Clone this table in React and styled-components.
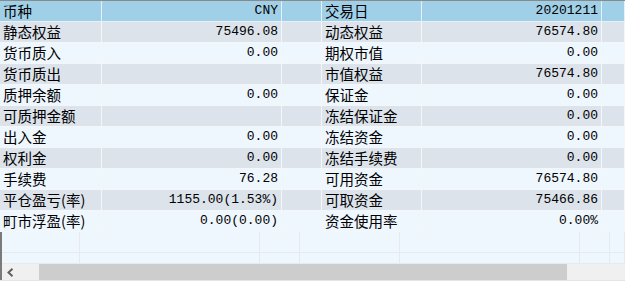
import React from "react";
import styled, { createGlobalStyle } from "styled-components";

const Global = createGlobalStyle`
  html, body { margin: 0; padding: 0; background: #ffffff; }
  body { width: 625px; height: 283px; overflow: hidden; }
`;

const Frame = styled.div`
  width: 625px;
  height: 283px;
  display: flex;
  flex-direction: column;
  border-top: 1px solid #8a8a8a;
  box-sizing: border-box;
  background: #ffffff;
  overflow: hidden;
`;

const COLS = "102px 180px 40px 100px 180px 1fr";

const Row = styled.div`
  display: grid;
  grid-template-columns: ${COLS};
  height: 21px;
  background: ${(p) => (p.$kind === "head" ? "#a0cfe8" : p.$kind === "odd" ? "#dce3eb" : "#eef6fe")};
`;

const Cell = styled.div`
  box-sizing: border-box;
  border-right: 1px solid ${(p) => (p.$head ? "#e4f1f8" : "#f4f6f8")};
  border-bottom: 1px solid ${(p) => (p.$head ? "#e4f1f8" : "#f4f6f8")};
  display: flex;
  align-items: center;
  justify-content: ${(p) => (p.$num ? "flex-end" : "flex-start")};
  padding: ${(p) => (p.$num ? "0 3px 0 0" : "0 0 0 3px")};
  white-space: nowrap;
  overflow: hidden;
  color: #000;
  font-family: ${(p) => (p.$num ? '"Liberation Mono", monospace' : '"Noto Sans CJK SC", sans-serif')};
  font-size: ${(p) => (p.$num ? "13px" : "14.5px")};
  line-height: 20px;
`;

const Blank = styled.div`
  display: grid;
  grid-template-columns: 78px 180px 40px 100px 180px 30px 1fr;
  height: ${(p) => p.$h}px;
  background: #eef6fe;
  border-left: 2px solid #7a7a7a;
`;

const BlankCell = styled.div`
  box-sizing: border-box;
  border-right: 1px solid #e6eaee;
  border-bottom: 1px solid #e6eaee;
`;

const ScrollBar = styled.div`
  display: flex;
  height: 16px;
  background: #f0f0f0;
  border-left: 2px solid #7a7a7a;
`;

const Arrow = styled.div`
  width: 37px;
  display: flex;
  align-items: center;
  padding-left: 5px;
  box-sizing: border-box;
`;

const Thumb = styled.div`
  width: 528px;
  background: #cdcdcd;
`;

const Bottom = styled.div`
  flex: 1;
  border-top: 1px solid #e4e4e4;
  background: #ffffff;
`;

const rows = [
  ["静态权益", "75496.08", "动态权益", "76574.80"],
  ["货币质入", "0.00", "期权市值", "0.00"],
  ["货币质出", "", "市值权益", "76574.80"],
  ["质押余额", "0.00", "保证金", "0.00"],
  ["可质押金额", "", "冻结保证金", "0.00"],
  ["出入金", "0.00", "冻结资金", "0.00"],
  ["权利金", "0.00", "冻结手续费", "0.00"],
  ["手续费", "76.28", "可用资金", "76574.80"],
  ["平仓盈亏(率)", "1155.00(1.53%)", "可取资金", "75466.86"],
  ["町市浮盈(率)", "0.00(0.00)", "资金使用率", "0.00%"],
];

export default function App() {
  return (
    <>
      <Global />
      <Frame>
        <Row $kind="head">
          <Cell $head>币种</Cell>
          <Cell $head $num>CNY</Cell>
          <Cell $head />
          <Cell $head>交易日</Cell>
          <Cell $head $num>20201211</Cell>
          <Cell $head />
        </Row>
        {rows.map((r, i) => (
          <Row key={i} $kind={i % 2 === 0 ? "odd" : "even"}>
            <Cell>{r[0]}</Cell>
            <Cell $num>{r[1]}</Cell>
            <Cell />
            <Cell>{r[2]}</Cell>
            <Cell $num>{r[3]}</Cell>
            <Cell />
          </Row>
        ))}
        <Blank $h={21}>
          {Array.from({ length: 7 }).map((_, i) => (
            <BlankCell key={i} />
          ))}
        </Blank>
        <Blank $h={11}>
          {Array.from({ length: 7 }).map((_, i) => (
            <BlankCell key={i} />
          ))}
        </Blank>
        <ScrollBar>
          <Arrow>
            <svg width="7" height="9" viewBox="0 0 7 9">
              <path d="M5.5 0.8 L1.5 4.5 L5.5 8.2" fill="none" stroke="#606060" strokeWidth="2" />
            </svg>
          </Arrow>
          <Thumb />
        </ScrollBar>
        <Bottom />
      </Frame>
    </>
  );
}
